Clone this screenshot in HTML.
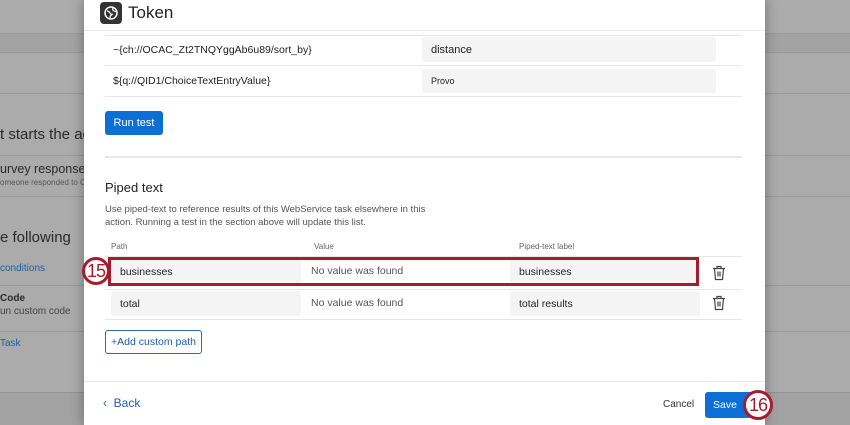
<!DOCTYPE html>
<html><head><meta charset="utf-8"><style>
body{margin:0;width:850px;height:425px;overflow:hidden;background:#ababab;font-family:"Liberation Sans",Arial,sans-serif;position:relative}
.l{position:absolute;left:0;right:0;height:1px;background:#999}
.bg{position:absolute;color:#2a2a2a;font-size:13px;white-space:nowrap}
.modal{position:absolute;left:84px;top:0;width:681px;height:425px;background:#fff;box-shadow:0 0 12px rgba(0,0,0,.35)}
.a{position:absolute;white-space:nowrap}
.inp{position:absolute;background:#f4f4f4;border-radius:3px;font-size:11px;color:#222;padding-left:9px;box-sizing:border-box;display:flex;align-items:center}
.hr{position:absolute;height:1px;background:#e8e8e8}
.circ{position:absolute;width:28px;height:28px;border:3px solid #a51d2d;border-radius:50%;background:#fff;color:#a51d2d;font-size:18px;display:flex;align-items:center;justify-content:center;box-sizing:border-box;letter-spacing:-1px}
</style></head><body>
<div style="position:absolute;left:0;right:0;top:33px;height:19px;background:#a3a3a3"></div>
<div class="l" style="top:33px"></div><div class="l" style="top:52px"></div>
<div class="l" style="top:93px"></div><div class="l" style="top:155px"></div>
<div class="l" style="top:196px"></div><div class="l" style="top:285px"></div>
<div class="l" style="top:331px"></div><div class="l" style="top:392px;background:#929292"></div>
<div style="position:absolute;left:0;right:0;top:393px;height:32px;background:#a2a2a2"></div>
<div class="bg" style="left:0;top:126px;font-size:15px">t starts the action</div>
<div class="bg" style="left:0;top:162px;font-size:12.5px">urvey response</div>
<div class="bg" style="left:0;top:178px;font-size:8px;color:#555">omeone responded to C</div>
<div class="bg" style="left:0;top:229px;font-size:15px">e following</div>
<div class="bg" style="left:0;top:263px;font-size:10px;color:#1a5fb4">conditions</div>
<div class="bg" style="left:0;top:293px;font-size:10px;font-weight:bold">Code</div>
<div class="bg" style="left:0;top:306px;font-size:10px;color:#444">un custom code</div>
<div class="bg" style="left:0;top:338px;font-size:10px;color:#1a5fb4">Task</div>
<div class="modal">
 <div class="a" style="left:16px;top:2px;width:22px;height:22px;background:#333;border-radius:4px"><svg width="22" height="22" viewBox="0 0 22 22"><circle cx="11" cy="11" r="6" fill="none" stroke="#fff" stroke-width="1.5"/><path d="M7 9q2 0 3 2t3 1M10 16q0-3 2-3M13 6q-1 2 1 3t2 0" fill="none" stroke="#fff" stroke-width="1.2"/></svg></div>
 <div class="a" style="left:44px;top:3px;font-size:17px;color:#222">Token</div>
 <div class="hr" style="left:0;width:681px;top:30px"></div>
 <div class="hr" style="left:21px;width:637px;top:35px"></div>
 <div class="a" style="left:29px;top:44px;font-size:10.5px;color:#222">~{ch://OCAC_Zt2TNQYggAb6u89/sort_by}</div>
 <div class="inp" style="left:338px;top:37px;width:294px;height:25px;font-size:11px">distance</div>
 <div class="hr" style="left:21px;width:637px;top:65px"></div>
 <div class="a" style="left:29px;top:75px;font-size:10.5px;color:#222">${q://QID1/ChoiceTextEntryValue}</div>
 <div class="inp" style="left:338px;top:69px;width:294px;height:24px;font-size:9px">Provo</div>
 <div class="hr" style="left:21px;width:637px;top:96px"></div>
 <div class="a" style="left:21px;top:111px;width:58px;height:24px;background:#0b6fd6;border-radius:3px;color:#fff;font-size:11px;display:flex;align-items:center;justify-content:center">Run test</div>
 <div class="hr" style="left:21px;width:637px;top:156px;height:2px"></div>
 <div class="a" style="left:21px;top:180px;font-size:13px;color:#222">Piped text</div>
 <div class="a" style="left:21px;top:203px;font-size:9.5px;color:#555;line-height:13px">Use piped-text to reference results of this WebService task elsewhere in this<br>action. Running a test in the section above will update this list.</div>
 <div class="a" style="left:27px;top:242px;font-size:8px;color:#666">Path</div>
 <div class="a" style="left:230px;top:242px;font-size:8px;color:#666">Value</div>
 <div class="a" style="left:435px;top:242px;font-size:8px;color:#666">Piped-text label</div>
 <div class="hr" style="left:21px;width:637px;top:256px"></div>
 <div class="inp" style="left:27px;top:259px;width:190px;height:25px;font-size:10.5px">businesses</div>
 <div class="a" style="left:227px;top:265px;font-size:10.5px;color:#555">No value was found</div>
 <div class="inp" style="left:426px;top:259px;width:190px;height:25px;font-size:10.5px">businesses</div>
 <div class="a" style="left:24px;top:257px;width:591px;height:29px;border:3px solid #a51d2d;box-sizing:border-box"></div>
 <div class="hr" style="left:21px;width:637px;top:289px"></div>
 <div class="inp" style="left:27px;top:291px;width:190px;height:25px;font-size:10.5px">total</div>
 <div class="a" style="left:227px;top:297px;font-size:10.5px;color:#555">No value was found</div>
 <div class="inp" style="left:426px;top:291px;width:190px;height:25px;font-size:10.5px">total results</div>
 <div class="hr" style="left:21px;width:637px;top:319px"></div>
 <svg class="a" style="left:628px;top:265px" width="14" height="16" viewBox="0 0 14 16"><path d="M1 3.5h12M5 3.5V1.5h4v2M2.5 3.5l1 11h7l1-11M6 6.5v5M8 6.5v5" fill="none" stroke="#444" stroke-width="1.2"/></svg>
 <svg class="a" style="left:628px;top:295px" width="14" height="16" viewBox="0 0 14 16"><path d="M1 3.5h12M5 3.5V1.5h4v2M2.5 3.5l1 11h7l1-11M6 6.5v5M8 6.5v5" fill="none" stroke="#444" stroke-width="1.2"/></svg>
 <div class="a" style="left:21px;top:330px;width:97px;height:24px;border:1px solid #2b6cb0;border-radius:3px;box-sizing:border-box;color:#1a5fb4;font-size:10.5px;display:flex;align-items:center;justify-content:center">+Add custom path</div>
 <div class="hr" style="left:0;width:681px;top:381px"></div>
 <div class="a" style="left:19px;top:396px;font-size:12px;color:#1a5fb4">‹&nbsp; Back</div>
 <div class="a" style="left:579px;top:399px;font-size:10px;color:#333">Cancel</div>
 <div class="a" style="left:621px;top:392px;width:48px;height:26px;background:#0b6fd6;border-radius:3px;color:#fff;font-size:10.5px;display:flex;align-items:center;justify-content:center;padding-right:8px;box-sizing:border-box">Save</div>
</div>
<div class="circ" style="left:82px;top:257px">15</div>
<div class="circ" style="left:743px;top:390px;width:30px;height:30px">16</div>
</body></html>
